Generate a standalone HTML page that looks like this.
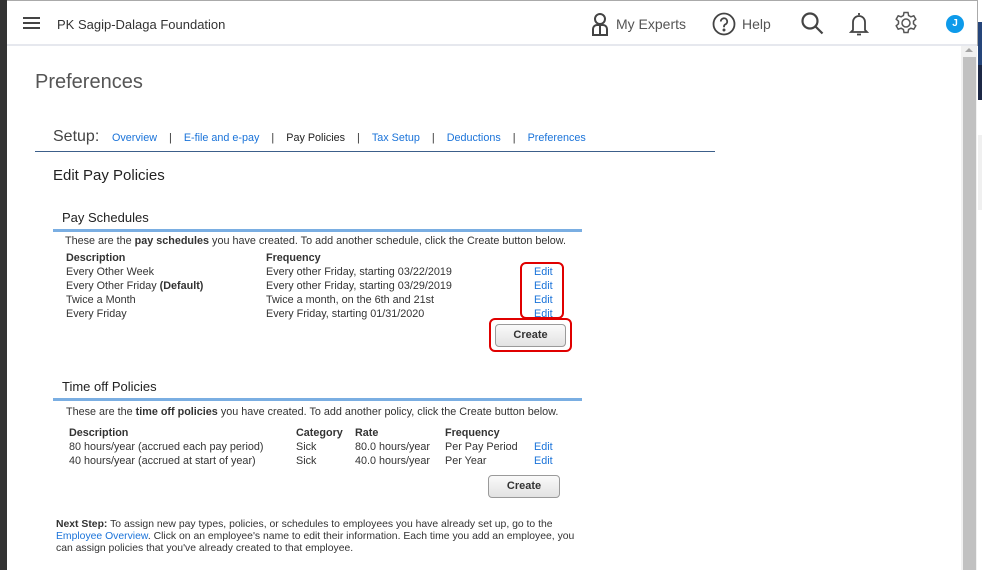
<!DOCTYPE html>
<html><head><style>
*{margin:0;padding:0;box-sizing:border-box}
body{width:982px;height:570px;overflow:hidden;background:#fff;font-family:"Liberation Sans",Arial,sans-serif;position:relative;color:#333}
.a{position:absolute;white-space:nowrap}
.s{font-size:10.8px;line-height:14px}
.l{color:#1a73d9}
.btn{position:absolute;border:1px solid #9a9a9a;border-radius:4px;background:linear-gradient(#fafafa,#e2e2e2);font-weight:bold;font-size:11px;text-align:center;color:#333}
.red{position:absolute;border:2.5px solid #e00000;border-radius:6px}
</style></head><body>
<div class="a" style="left:0;top:0;width:7px;height:570px;background:#333"></div>
<div class="a" style="left:7px;top:0;width:971px;height:1px;background:#aaa"></div>
<div class="a" style="left:7px;top:44px;width:971px;height:2px;background:#e6e8ee"></div>
<div class="a" style="left:977px;top:0;width:1px;height:46px;background:#aaa"></div>
<div class="a" style="left:978px;top:22px;width:4px;height:75px;background:#25457a"></div>
<div class="a" style="left:978px;top:65px;width:4px;height:35px;background:#1c2846"></div>
<div class="a" style="left:978px;top:135px;width:4px;height:75px;background:#f0f0f0"></div>
<!-- hamburger -->
<div class="a" style="left:23px;top:17px;width:17px;height:2px;background:#444"></div>
<div class="a" style="left:23px;top:22px;width:17px;height:2px;background:#444"></div>
<div class="a" style="left:23px;top:27px;width:17px;height:2px;background:#444"></div>
<div class="a" style="left:57px;top:17px;font-size:13px;color:#333">PK Sagip-Dalaga Foundation</div>
<!-- icons -->
<svg class="a" style="left:590px;top:12px" width="20" height="24" viewBox="0 0 20 24" fill="none" stroke="#444" stroke-width="2"><circle cx="10" cy="7" r="5"/><path d="M3 23v-6a4 4 0 0 1 4-4h6a4 4 0 0 1 4 4v6z"/><path d="M10 14v8"/></svg>
<div class="a" style="left:616px;top:16px;font-size:14px;color:#555">My Experts</div>
<svg class="a" style="left:712px;top:12px" width="24" height="24" viewBox="0 0 24 24" fill="none" stroke="#444" stroke-width="1.8"><circle cx="12" cy="12" r="10.5"/><path d="M8.8 9.5a3.2 3.2 0 1 1 4.5 2.9c-.9.5-1.3 1.1-1.3 2.1v.7"/><circle cx="12" cy="18" r=".6" fill="#444"/></svg>
<div class="a" style="left:742px;top:16px;font-size:14px;color:#555">Help</div>
<svg class="a" style="left:800px;top:11px" width="25" height="25" viewBox="0 0 25 25" fill="none" stroke="#444" stroke-width="2.2"><circle cx="10" cy="10" r="7.5"/><path d="M15.5 15.5l7 7"/></svg>
<svg class="a" style="left:849px;top:11px" width="20" height="26" viewBox="0 0 20 26" fill="none" stroke="#444" stroke-width="1.8"><path d="M10 2v2M4 19V11a6 6 0 0 1 12 0v8l2 2H2z"/><path d="M8 23.5h4"/></svg>
<svg class="a" style="left:894px;top:11px" width="24" height="24" viewBox="0 0 24 24" fill="none" stroke="#555" stroke-width="1.5"><circle cx="12" cy="12" r="4"/><path d="M10 1.5h4l.6 3 2.3 1.3 2.9-1 2 3.4-2.3 2v2.6l2.3 2-2 3.4-2.9-1-2.3 1.3-.6 3h-4l-.6-3-2.3-1.3-2.9 1-2-3.4 2.3-2v-2.6l-2.3-2 2-3.4 2.9 1 2.3-1.3z"/></svg>
<div class="a" style="left:946px;top:15px;width:18px;height:18px;border-radius:50%;background:#0d9aea;color:#fff;font-size:10px;font-weight:bold;text-align:center;line-height:18px">J</div>
<!-- scrollbar -->
<div class="a" style="left:961px;top:46px;width:16px;height:524px;background:#f1f1f1"></div>
<div class="a" style="left:963px;top:57px;width:13px;height:513px;background:#c1c1c1"></div>
<div class="a" style="left:965px;top:48px;width:0;height:0;border-left:4px solid transparent;border-right:4px solid transparent;border-bottom:4px solid #a3a3a3"></div>
<!-- content -->
<div class="a" style="left:35px;top:71px;font-size:20px;color:#555">Preferences</div>
<div class="a" style="left:53px;top:128px;font-size:16px;color:#444">Setup:</div>
<div class="a s" style="left:112px;top:131px"><span class="l">Overview</span>&nbsp;&nbsp;&nbsp;&nbsp;|&nbsp;&nbsp;&nbsp;&nbsp;<span class="l">E-file and e-pay</span>&nbsp;&nbsp;&nbsp;&nbsp;|&nbsp;&nbsp;&nbsp;&nbsp;<span style="color:#222">Pay Policies</span>&nbsp;&nbsp;&nbsp;&nbsp;|&nbsp;&nbsp;&nbsp;&nbsp;<span class="l">Tax Setup</span>&nbsp;&nbsp;&nbsp;&nbsp;|&nbsp;&nbsp;&nbsp;&nbsp;<span class="l">Deductions</span>&nbsp;&nbsp;&nbsp;&nbsp;|&nbsp;&nbsp;&nbsp;&nbsp;<span class="l">Preferences</span></div>
<div class="a" style="left:35px;top:151px;width:680px;height:1px;background:#3c5f8a"></div>
<div class="a" style="left:53px;top:167px;font-size:15px;color:#222">Edit Pay Policies</div>
<div class="a" style="left:62px;top:210px;font-size:13px;color:#222">Pay Schedules</div>
<div class="a" style="left:53px;top:229px;width:529px;height:3px;background:#7aaee2"></div>
<div class="a s" style="left:65px;top:234px">These are the <b>pay schedules</b> you have created. To add another schedule, click the Create button below.</div>
<div class="a s" style="left:66px;top:251px"><b>Description</b><br>Every Other Week<br>Every Other Friday <b>(Default)</b><br>Twice a Month<br>Every Friday</div>
<div class="a s" style="left:266px;top:251px"><b>Frequency</b><br>Every other Friday, starting 03/22/2019<br>Every other Friday, starting 03/29/2019<br>Twice a month, on the 6th and 21st<br>Every Friday, starting 01/31/2020</div>
<div class="a s l" style="left:534px;top:265px">Edit<br>Edit<br>Edit<br>Edit</div>
<div class="red" style="left:520px;top:262px;width:44px;height:57px"></div>
<div class="btn" style="left:495px;top:324px;width:71px;height:23px;line-height:21px">Create</div>
<div class="red" style="left:489px;top:318px;width:83px;height:34px"></div>
<div class="a" style="left:62px;top:379px;font-size:13px;color:#222">Time off Policies</div>
<div class="a" style="left:53px;top:398px;width:529px;height:3px;background:#7aaee2"></div>
<div class="a s" style="left:66px;top:405px">These are the <b>time off policies</b> you have created. To add another policy, click the Create button below.</div>
<div class="a s" style="left:69px;top:426px"><b>Description</b><br>80 hours/year (accrued each pay period)<br>40 hours/year (accrued at start of year)</div>
<div class="a s" style="left:296px;top:426px"><b>Category</b><br>Sick<br>Sick</div>
<div class="a s" style="left:355px;top:426px"><b>Rate</b><br>80.0 hours/year<br>40.0 hours/year</div>
<div class="a s" style="left:445px;top:426px"><b>Frequency</b><br>Per Pay Period<br>Per Year</div>
<div class="a s l" style="left:534px;top:440px">Edit<br>Edit</div>
<div class="btn" style="left:488px;top:475px;width:72px;height:23px;line-height:21px">Create</div>
<div class="a" style="left:56px;top:519px;font-size:10.4px;line-height:12px;white-space:normal;width:525px"><b>Next Step:</b> To assign new pay types, policies, or schedules to employees you have already set up, go to the <span class="l">Employee Overview</span>. Click on an employee's name to edit their information. Each time you add an employee, you can assign policies that you've already created to that employee.</div>
</body></html>
